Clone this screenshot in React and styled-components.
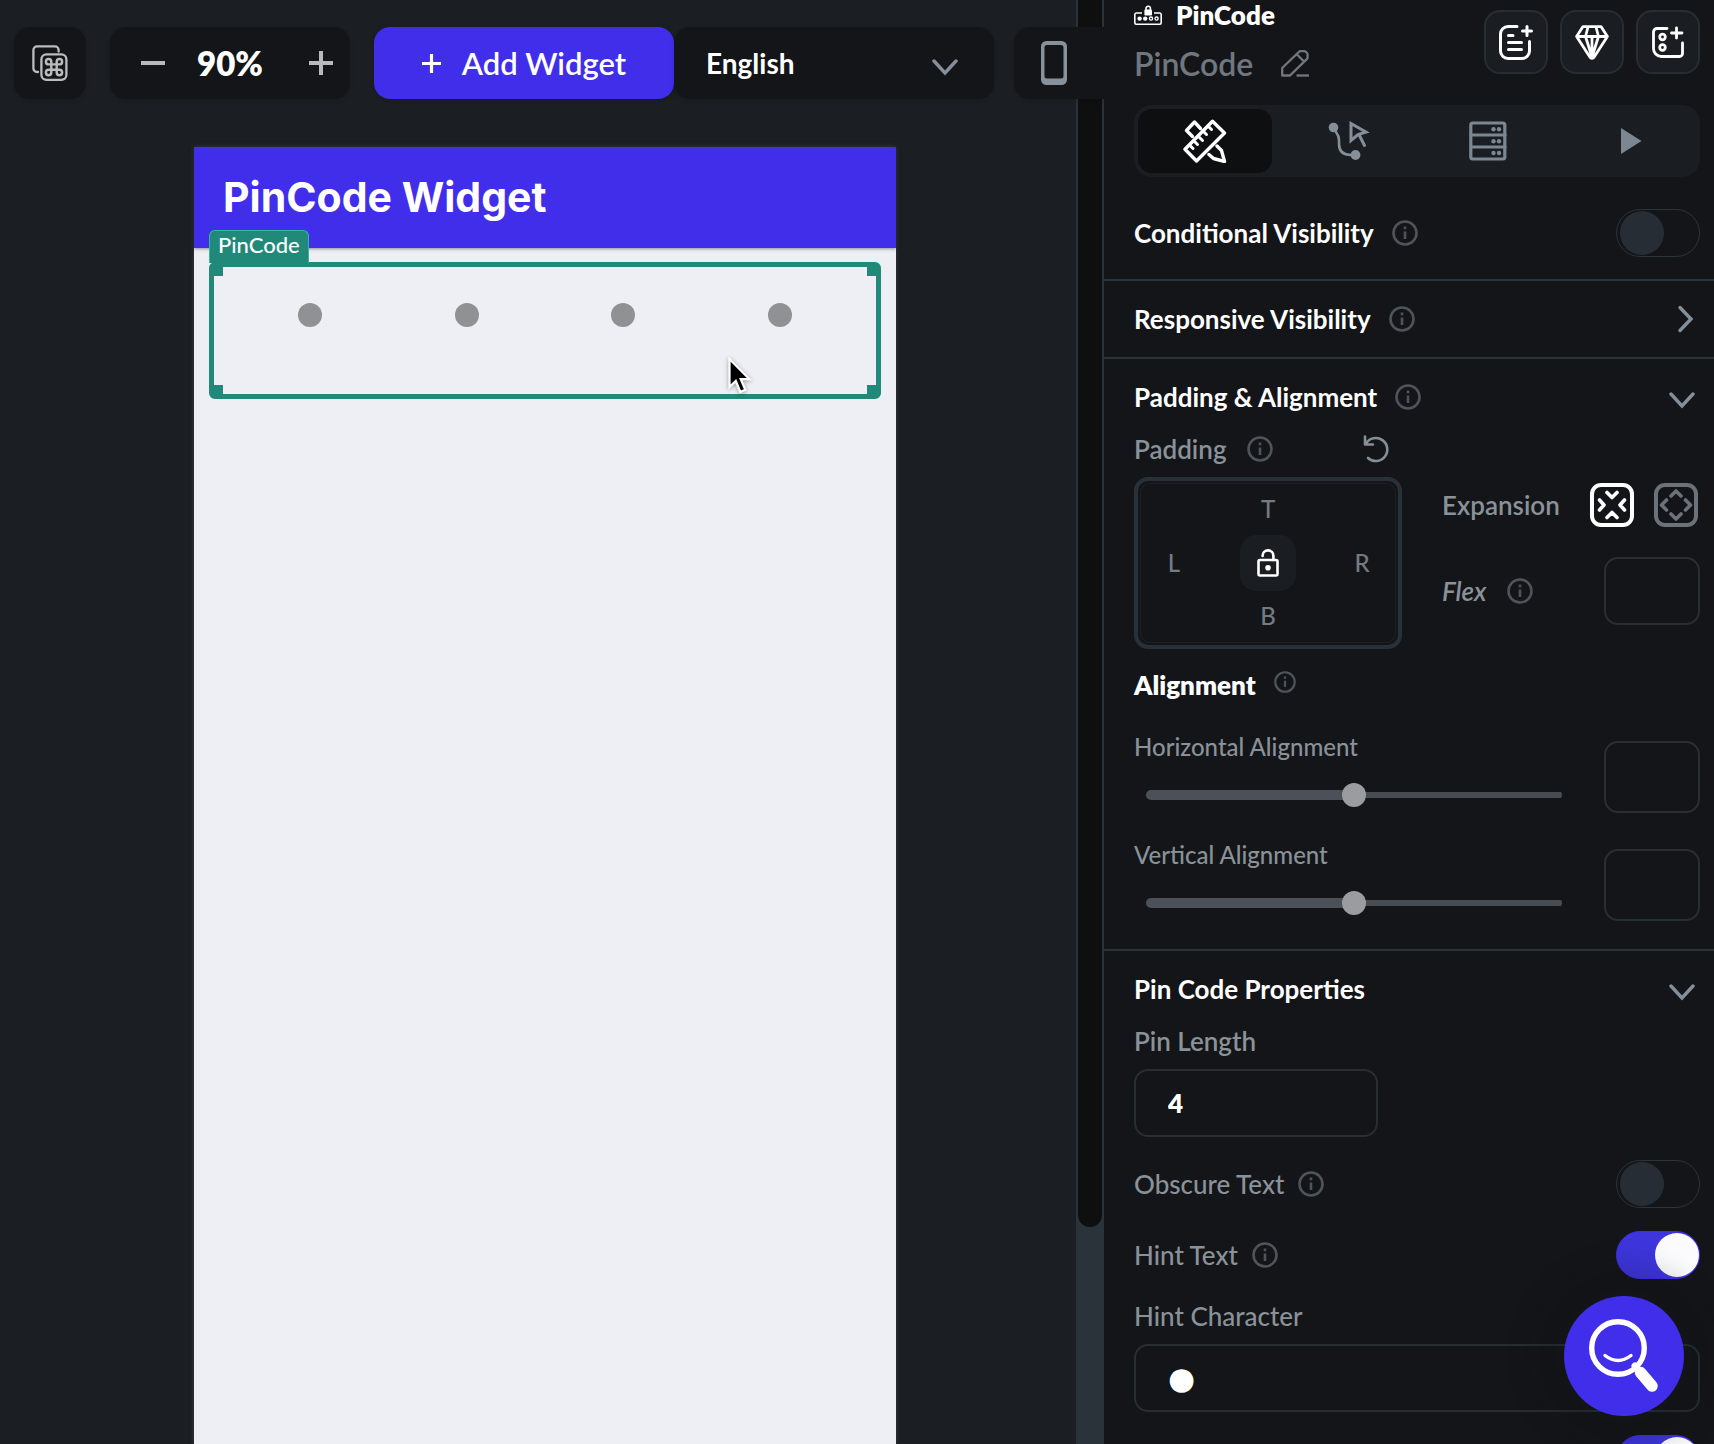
import React, { useId, useState } from 'react';
import styled, { createGlobalStyle, css } from 'styled-components';

const c = {
  canvas: '#1b1f23',
  panel: '#141518',
  raised: '#1a1e22',
  line: '#2b333a',
  brand: '#402eeb',
  teal: '#20897a',
  white: '#ffffff',
  muted: '#8a9299',
  dim: '#70777f',
  icon: '#858f99',
};

const Global = createGlobalStyle`
  *, *::before, *::after { box-sizing: border-box; }
  body {
    margin: 0;
    background: ${c.canvas};
    font-family: Lato, "Open Sans", "Liberation Sans", sans-serif;
  }
  button, input, select { font: inherit; color: inherit; margin: 0; }
  button { padding: 0; border: 0; background: none; cursor: pointer; }
  svg { display: block; flex: none; }
  h1, h2, h3, p { margin: 0; }
`;

/* ---------- Shell ---------- */

const Shell = styled.div`
  position: relative;
  display: flex;
  height: 100vh;
  overflow: hidden;
  color: ${c.white};
`;

const Canvas = styled.main`
  flex: 1;
  min-width: 0;
  display: flex;
  flex-direction: column;
  gap: 48px;
  padding: 27px 0 0 14px;
  background: ${c.canvas};
`;

const Gutter = styled.div`
  flex: 0 0 28px;
  padding: 0 2px;
  background: ${c.line};
`;

const Thumb = styled.div`
  height: 85%;
  border-radius: 0 0 12px 12px;
  background: #0e0f0f;
`;

const Panel = styled.aside`
  position: relative;
  z-index: 2;
  flex: 0 0 610px;
  display: flex;
  flex-direction: column;
  overflow: hidden;
  background: ${c.panel};

  > * { flex: none; }
`;

/* ---------- Toolbar ---------- */

const Toolbar = styled.header`
  position: relative;
  z-index: 1;
  display: flex;
  gap: 20px;
`;

const ToolGroup = styled.div`
  display: flex;
  gap: ${(p) => p.$gap}px;
`;

const tile = css`
  flex: none;
  height: 72px;
  border-radius: 16px;
  background: #131518;
  box-shadow: 0 2px 4px rgba(0, 0, 0, 0.12);
`;

const TileButton = styled.button`
  ${tile}
  width: 72px;
  display: grid;
  place-items: center;
`;

const ZoomBox = styled.div`
  ${tile}
  width: 240px;
  display: grid;
  grid-template-columns: 26px 1fr 26px;
  align-items: center;
  column-gap: 31px;
  padding: 0 16px 0 30px;
  font-size: 33px;
  font-weight: 800;
`;

const ZoomButton = styled.button`
  height: 48px;
  display: grid;
  place-items: center;
`;

const AddButton = styled.button`
  ${tile}
  width: 300px;
  display: flex;
  align-items: center;
  justify-content: center;
  gap: 21px;
  background: ${c.brand};
  font-size: 31px;
  font-weight: 600;
`;

const SelectBox = styled.div`
  ${tile}
  width: 320px;
  display: grid;
  align-items: center;

  > * { grid-area: 1 / 1; }
  > svg { justify-self: end; margin: 8px 36px 0 0; pointer-events: none; }
`;

const LanguageSelect = styled.select`
  appearance: none;
  width: 100%;
  height: 100%;
  padding: 0 32px;
  border: 0;
  background: transparent;
  font-size: 28px;
  font-weight: 700;
`;

const DeviceBox = styled.div`
  ${tile}
  width: 150px;
  display: flex;
  padding: 0 27px;
`;

/* ---------- Device preview ---------- */

const Device = styled.section`
  flex: 1;
  margin: 0 180px;
  background: #eeeff4;
  color: ${c.white};
  box-shadow: 0 0 4px rgba(90, 90, 90, 0.6);
`;

const AppBar = styled.div`
  height: 101px;
  padding: 0 29px;
  background: ${c.brand};
  box-shadow: 0 1px 3px rgba(0, 0, 0, 0.4);
`;

const AppTitle = styled.h1`
  font-family: Inter, "Open Sans", sans-serif;
  font-size: 41px;
  line-height: 100px;
  font-weight: 700;
`;

const Selection = styled.div`
  position: relative;
  display: grid;
  grid-template-columns: repeat(4, 1fr);
  justify-items: center;
  align-items: start;
  height: 137px;
  margin: 14px 15px 0;
  padding: 36px 18px 0;
  border: 5px solid ${c.teal};
  border-radius: 6px;
`;

const SelectionTag = styled.span`
  position: absolute;
  left: -5px;
  bottom: 100%;
  margin-bottom: 4px;
  height: 33px;
  padding: 0 8px;
  border: 1px solid #35b79b;
  border-bottom: 0;
  border-radius: 6px 6px 0 0;
  background: ${c.teal};
  font-size: 22px;
  line-height: 28px;
  font-weight: 500;
`;

const Handle = styled.i`
  position: absolute;
  width: 9px;
  height: 9px;
  background: ${c.teal};
  ${(p) => (p.$v === 'top' ? 'top: 0;' : 'bottom: 0;')}
  ${(p) => (p.$h === 'left' ? 'left: 0;' : 'right: 0;')}
`;

const PinDot = styled.span`
  width: 24px;
  height: 24px;
  border-radius: 50%;
  background: #909193;
`;

const Pointer = styled.svg`
  position: absolute;
  left: 514px;
  top: 90px;
  filter: drop-shadow(0 1px 2px rgba(0, 0, 0, 0.35));
`;

/* ---------- Panel head ---------- */

const PanelHead = styled.div`
  display: flex;
  justify-content: space-between;
  padding: 0 14px 21px 30px;
`;

const Kind = styled.div`
  display: flex;
  align-items: center;
  gap: 14px;
  height: 30px;
  font-size: 26px;
  font-weight: 800;
`;

const NameRow = styled.div`
  display: flex;
  align-items: center;
  gap: 28px;
  height: 54px;
  padding-top: 12px;
  color: ${c.dim};
  font-size: 32px;
  font-weight: 600;
`;

const PlainButton = styled.button`
  display: grid;
  place-items: center;
`;

const HeadActions = styled.div`
  display: flex;
  gap: 12px;
  padding-top: 10px;
`;

const HeadButton = styled.button`
  width: 64px;
  height: 64px;
  display: grid;
  place-items: center;
  border: 2px solid #272d33;
  border-radius: 16px;
  background: ${c.raised};
`;

const Tabs = styled.nav`
  display: grid;
  grid-template-columns: repeat(4, 1fr);
  height: 72px;
  margin: 0 14px 0 30px;
  border-radius: 18px;
  background: ${c.raised};
`;

const Tab = styled.button`
  display: grid;
  place-items: center;
  margin: 4px;
  border-radius: 14px;
  background: ${(p) => (p.$active ? '#0e0f10' : 'transparent')};
`;

/* ---------- Sections ---------- */

const Section = styled.section`
  padding: 0 14px ${(p) => p.$bottom || 0}px 30px;
  border-bottom: 2px solid ${c.line};
`;

const Row = styled.div`
  display: flex;
  align-items: center;
  justify-content: space-between;
  min-height: ${(p) => p.$h || 48}px;
  margin-top: ${(p) => p.$top || 0}px;
`;

const LabelGroup = styled.div`
  display: flex;
  align-items: ${(p) => (p.$raised ? 'flex-start' : 'center')};
  gap: ${(p) => p.$gap || 18}px;
`;

const Heading = styled.h3`
  font-size: 26px;
  line-height: 28px;
  font-weight: ${(p) => (p.$heavy ? 800 : 700)};
`;

const Label = styled.label`
  display: block;
  color: ${c.muted};
  font-size: ${(p) => (p.$small ? 24 : 26)}px;
  line-height: 28px;
  font-weight: ${(p) => (p.$strong ? 600 : 500)};
  font-style: ${(p) => (p.$italic ? 'italic' : 'normal')};
`;

const CollapseButton = styled.button`
  display: grid;
  place-items: center;
  padding: ${(p) => (p.$open ? '6px 5px 0 0' : '0 5px 0 0')};
`;

const Toggle = styled.input`
  appearance: none;
  display: flex;
  align-items: center;
  justify-content: ${(p) => (p.checked ? 'flex-end' : 'flex-start')};
  flex: none;
  width: 84px;
  height: 48px;
  padding: 0 ${(p) => (p.checked ? 0 : 3)}px;
  border: 1px solid ${(p) => (p.checked ? c.brand : c.line)};
  border-radius: 24px;
  background: ${(p) => (p.checked ? '#3e35dc' : 'transparent')};

  &::before {
    content: '';
    width: 44px;
    height: 44px;
    border-radius: 50%;
    background: ${(p) => (p.checked ? '#fbfbfd' : '#262d34')};
  }
`;

const Field = styled.input`
  display: block;
  width: ${(p) => p.$w || '100%'};
  height: ${(p) => p.$h || 68}px;
  padding: 0 ${(p) => (p.$compact ? 16 : 32)}px;
  border: 2px solid #272e34;
  border-radius: 14px;
  background: transparent;
  font-size: 26px;
  font-weight: 800;
  outline: none;
`;

const GlyphField = styled(Field)`
  font-family: "DejaVu Sans", sans-serif;
  font-size: 31px;
`;

const Stack = styled.div`
  display: flex;
  flex-direction: column;
  gap: ${(p) => p.$gap}px;
  padding-top: ${(p) => p.$top || 0}px;
`;

const PaddingArea = styled.div`
  display: grid;
  grid-template-columns: 268px 1fr;
  gap: 14px 40px;
`;

const PaddingTitle = styled(Row)`
  grid-column: 1;
  padding-right: 12px;
`;

const PaddingFrame = styled.div`
  grid-column: 1;
  height: 172px;
  padding: 2px;
  border: 4px solid #28313a;
  border-radius: 14px;
`;

const PaddingGrid = styled.div`
  display: grid;
  grid-template: 1fr 56px 1fr / 66px 1fr 66px;
  place-items: center;
  height: 100%;
  border: 1px solid #1d2226;
  border-radius: 10px;
`;

const SideInput = styled.input`
  grid-area: ${(p) => p.$at};
  width: 48px;
  height: 32px;
  padding: 0 0 2px;
  border: 0;
  outline: 0;
  background: transparent;
  text-align: center;
  font-size: 24px;
  font-weight: 500;

  &::placeholder { color: #747b83; opacity: 1; }
`;

const LockButton = styled.button`
  grid-area: 2 / 2;
  width: 56px;
  height: 56px;
  display: grid;
  place-items: center;
  border-radius: 16px;
  background: ${c.raised};
`;

const ExpansionArea = styled.div`
  grid-column: 2;
  display: flex;
  flex-direction: column;
  gap: 30px;
  padding-top: 6px;
`;

const ExpandButtons = styled.div`
  display: flex;
  gap: 20px;
  padding-right: 2px;
`;

const ExpandButton = styled.button`
  width: 44px;
  height: 44px;
  display: grid;
  place-items: center;
  border: 4px solid ${(p) => (p.$active ? c.white : '#6a727b')};
  border-radius: 11px;
  color: ${(p) => (p.$active ? c.white : '#6a727b')};
`;

const SliderRow = styled.div`
  display: grid;
  grid-template-columns: 1fr 96px;
  column-gap: 42px;
  align-items: end;
`;

const SliderCol = styled(Stack)`
  padding-bottom: 6px;
`;

const Slider = styled.input`
  appearance: none;
  display: block;
  height: 24px;
  margin-left: 12px;
  background: transparent;

  &::-webkit-slider-runnable-track {
    height: 10px;
    border-radius: 5px;
    background:
      linear-gradient(#4c5058, #4c5058) left center / 50% 10px no-repeat,
      linear-gradient(#484d54, #484d54) right center / 50% 6px no-repeat;
  }

  &::-webkit-slider-thumb {
    appearance: none;
    width: 24px;
    height: 24px;
    margin-top: -7px;
    border-radius: 50%;
    background: #9b9c9f;
  }
`;

const HelpButton = styled.button`
  position: absolute;
  z-index: 3;
  right: 30px;
  bottom: 28px;
  width: 120px;
  height: 120px;
  border-radius: 50%;
  background: ${c.brand};
  box-shadow: 0 0 24px 36px rgba(12, 13, 15, 0.12);
`;

/* ---------- Icons ---------- */

const Svg = ({ w, h, sw = 2, children, color = 'currentColor', ...rest }) => (
  <svg width={w} height={h} viewBox={`0 0 ${w} ${h}`} fill="none" stroke={color}
    strokeWidth={sw} strokeLinecap="round" strokeLinejoin="round" aria-hidden="true" {...rest}>
    {children}
  </svg>
);

const InfoIcon = ({ size = 26 }) => (
  <svg width={size} height={size} viewBox="0 0 26 26" fill="none" stroke="#4d545b" strokeWidth="2.6" aria-hidden="true">
    <circle cx="13" cy="13" r="11.5" />
    <path d="M13 11.5V19M13 6.6v2.6" />
  </svg>
);

const Info = ({ topic, size }) => (
  <PlainButton type="button" aria-label={`About ${topic}`}><InfoIcon size={size} /></PlainButton>
);

const CommandIcon = () => (
  <Svg w={36} h={36} sw={2.3} color="#bcbcbc">
    <path d="M6 27H5a3.6 3.6 0 0 1-3.6-3.6V5A3.6 3.6 0 0 1 5 1.4h18A3.6 3.6 0 0 1 26.600 5v1.500" />
    <rect x="9.400" y="9.400" width="25" height="25.400" rx="5" />
    <path transform="translate(11.200 11.300) scale(.9)" strokeWidth="2.700" d="M15 6v12a3 3 0 1 0 3-3H6a3 3 0 1 0 3 3V6a3 3 0 1 0-3 3h12a3 3 0 1 0-3-3" />
  </Svg>
);

const MinusIcon = () => (
  <Svg w={24} h={24} sw={4} color="#b9b9b9" strokeLinecap="butt"><path d="M0 12h24" /></Svg>
);

const PlusIcon = ({ size = 24, sw = 4, color = '#b9b9b9' }) => (
  <svg width={size} height={size} viewBox="0 0 24 24" fill="none" stroke={color} strokeWidth={sw} aria-hidden="true">
    <path d="M12 0v24M0 12h24" />
  </svg>
);

const ChevronDown = () => (
  <Svg w={26} h={18} sw={3.4} color={c.icon}><path d="M2 3l11 12L24 3" strokeLinejoin="miter" /></Svg>
);

const ChevronRight = () => (
  <Svg w={18} h={28} sw={3.4} color={c.icon}><path d="M3 2.500l11 11.500L3 25.500" strokeLinejoin="miter" /></Svg>
);

const PhoneIcon = () => (
  <svg width="26" height="44" viewBox="0 0 26 44" aria-hidden="true">
    <path fill="#87919b" fillRule="evenodd" d="M5.500 0h15A5.500 5.500 0 0 1 26 5.500v33a5.500 5.500 0 0 1-5.500 5.500h-15A5.500 5.500 0 0 1 0 38.500v-33A5.500 5.500 0 0 1 5.500 0zM6 4a2.500 2.500 0 0 0-2.500 2.500V35A2.500 2.500 0 0 0 6 37.500h14a2.500 2.500 0 0 0 2.500-2.500V6.500A2.500 2.500 0 0 0 20 4z" />
  </svg>
);

const PinCodeIcon = () => (
  <svg width="28" height="20" viewBox="0 0 28 20" fill="none" stroke="#fff" strokeWidth="1.600" aria-hidden="true">
    <path d="M8 8H2.200A1.500 1.500 0 0 0 .8 9.500v8.200a1.500 1.500 0 0 0 1.400 1.500h23.600a1.500 1.500 0 0 0 1.400-1.500V9.500A1.500 1.500 0 0 0 25.800 8H20" />
    <path d="M12 5V3.400a2.200 2.200 0 0 1 4.400 0V5" />
    <rect x="10.400" y="4.400" width="7.600" height="6" rx="1" fill="#fff" stroke="none" />
    <circle cx="5.600" cy="13.600" r="2.200" fill="#fff" stroke="none" />
    <circle cx="11.200" cy="13.600" r="2.200" fill="#fff" stroke="none" />
    <circle cx="17" cy="13.600" r="1.600" strokeWidth="1.300" />
    <circle cx="22.600" cy="13.600" r="1.600" strokeWidth="1.300" />
  </svg>
);

const PencilIcon = () => (
  <Svg w={28} h={27} sw={2.3} color={c.dim} strokeLinecap="butt">
    <path d="M1.200 25.500v-7.500L17.800 2a2.800 2.800 0 0 1 2-.8h3.200a2.800 2.800 0 0 1 2 .8l.8.8a2.900 2.900 0 0 1 .8 2v2.400a2.800 2.800 0 0 1-.8 2L9 25.500z" />
    <path d="M15.500 4l7.500 7.500" />
    <path d="M15.500 25.500H28" />
  </Svg>
);

const NotePlusIcon = () => (
  <Svg w={34} h={35} sw={3}>
    <path d="M18 1.500H9A7.500 7.500 0 0 0 1.500 9v17A7.500 7.500 0 0 0 9 33.500h14a7.500 7.500 0 0 0 7.500-7.500V16.500" />
    <path d="M9.500 10.500h4.500M9.500 17.500h13M9.500 24.500h13M28 1.500v9M23.500 6h9" />
  </Svg>
);

const DiamondIcon = () => (
  <Svg w={34} h={35} sw={2.8}>
    <path d="M8 1.600h18L32.400 11.500 19 32.200a2.400 2.400 0 0 1-4 0L1.600 11.500zM1.600 11.500h30.800M13 2l-2.500 9.500L17 32l6.500-20.500L21 2M17 11.500V32" />
  </Svg>
);

const ComponentPlusIcon = () => (
  <Svg w={32} h={32} sw={2.8}>
    <path d="M15 2.500H5A3.500 3.500 0 0 0 1.500 6v16A8 8 0 0 0 9.500 30.500h18a3 3 0 0 0 3-3V17" />
    <circle cx="10.500" cy="11" r="2.800" />
    <circle cx="10.500" cy="21.500" r="2.800" />
    <path d="M24.500 2v10M19.500 7h10.500" />
  </Svg>
);

const DesignIcon = () => (
  <Svg w={44} h={44} sw={3.4}>
    <path d="M29.500 2.200 41.500 14 13.500 42 2 30.200z" />
    <path d="M25 7l3.500 3.500M20 12l3.500 3.500M15 17l4.500 4.500M11 22l3.500 3.500M7 26.500l3 3" strokeWidth="3" />
    <path d="M9.500 17.500 3.500 11.500l8-8.500 6 6.500" />
    <path d="M34 27l4.500 4.500 3 11-11-3-4.500-4" />
  </Svg>
);

const FlowIcon = () => (
  <Svg w={36} h={40} sw={3} color={c.icon} overflow="visible">
    <circle cx="5.500" cy="6.500" r="4.800" fill={c.icon} stroke="none" />
    <circle cx="27.500" cy="34" r="4.900" fill={c.icon} stroke="none" />
    <path strokeWidth="2.600" d="M6 8c2 4 5 5 5 11v4c0 7 3.500 11 12 11" />
    <path d="M23 2.500l15 8.500-8 2.500-7 6zM31.500 14.500l5 10" strokeLinejoin="miter" />
  </Svg>
);

const DatabaseIcon = () => (
  <Svg w={38} h={40} sw={3.2} color="#7d8791">
    <rect x="1.800" y="2" width="34" height="36" rx="2" />
    <path d="M2 14h34M2 26h34" />
    <g fill="#7d8791" stroke="none">
      <circle cx="24.500" cy="8.200" r="2.200" /><circle cx="30" cy="8.200" r="2.200" />
      <circle cx="24.500" cy="20.200" r="2.200" /><circle cx="30" cy="20.200" r="2.200" />
      <circle cx="24.500" cy="32" r="2.200" /><circle cx="30" cy="32" r="2.200" />
    </g>
  </Svg>
);

const PlayIcon = () => (
  <svg width="20" height="28" viewBox="0 0 20 28" overflow="visible" aria-hidden="true"><path fill="#7d8791" d="M2 1l20.500 13L2 27z" /></svg>
);

const UndoIcon = () => (
  <Svg w={27} h={28} sw={2.6} color={c.icon}>
    <path d="M2 1.500V9.500h8M3 8.500A11.500 11.500 0 1 1 5 23" />
  </Svg>
);

const LockIcon = () => (
  <Svg w={22} h={28} sw={2.6}>
    <rect x="1.500" y="11" width="19" height="15.500" rx="1.500" />
    <path d="M5.600 7V6.800a5.400 5.400 0 0 1 10.800 0V11" />
    <circle cx="11" cy="18.800" r="2.800" fill="currentColor" stroke="none" />
  </Svg>
);

const ShrinkIcon = () => (
  <Svg w={32} h={32} sw={3.6}>
    <path d="M11 3.500l5 5 5-5M11 28.500l5-5 5 5M3.500 11l4.500 5-4.500 5M28.500 11L24 16l4.500 5" />
  </Svg>
);

const GrowIcon = () => (
  <Svg w={34} h={34} sw={3.6}>
    <path d="M12 8l5-5 5 5M12 26l5 5 5-5M7.500 12l-5 5 5 5M26.500 12l5 5-5 5" />
  </Svg>
);

const SearchSmile = () => (
  <svg width="120" height="120" viewBox="0 0 120 120" fill="none" stroke="#fff" strokeLinecap="round" aria-hidden="true">
    <circle cx="54" cy="52" r="26.300" strokeWidth="5.400" />
    <path d="M41 59.500q13 10 26 0" strokeWidth="3.400" />
    <path d="M71 70l5 6" strokeWidth="7" />
    <path d="M76.500 76.500L88 90" strokeWidth="11.500" />
  </svg>
);

/* ---------- Parts ---------- */

function Switch({ id, label, on = false }) {
  const [checked, setChecked] = useState(on);
  return (
    <Toggle type="checkbox" role="switch" id={id} aria-label={label}
      checked={checked} onChange={(e) => setChecked(e.target.checked)} />
  );
}

function SwitchRow({ label, on }) {
  const id = useId();
  return (
    <Row>
      <LabelGroup $gap={14}>
        <Label htmlFor={id}>{label}</Label>
        <Info topic={label} />
      </LabelGroup>
      <Switch id={id} on={on} />
    </Row>
  );
}

function AlignmentSlider({ label }) {
  const id = useId();
  return (
    <SliderRow>
      <SliderCol $gap={22}>
        <Label $small htmlFor={id}>{label}</Label>
        <Slider id={id} type="range" min="-1" max="1" step="0.01" defaultValue="0" />
      </SliderCol>
      <Field $compact $h={72} aria-label={`${label} value`} />
    </SliderRow>
  );
}

function SectionTitle({ title, info = true, open = false }) {
  return (
    <Row $h={76}>
      <LabelGroup>
        <Heading>{title}</Heading>
        {info && <Info topic={title} />}
      </LabelGroup>
      <CollapseButton type="button" $open={open} aria-expanded={open} aria-label={title}>
        {open ? <ChevronDown /> : <ChevronRight />}
      </CollapseButton>
    </Row>
  );
}

const sides = [['T', 'Top', '1 / 2'], ['L', 'Left', '2 / 1'], ['R', 'Right', '2 / 3'], ['B', 'Bottom', '3 / 2']];

export default function App() {
  return (
    <>
      <Global />
      <Shell>
        <Canvas>
          <Toolbar>
            <ToolGroup $gap={24}>
              <TileButton type="button" aria-label="Shortcuts"><CommandIcon /></TileButton>
              <ZoomBox>
                <ZoomButton type="button" aria-label="Zoom out"><MinusIcon /></ZoomButton>
                <span>90%</span>
                <ZoomButton type="button" aria-label="Zoom in"><PlusIcon /></ZoomButton>
              </ZoomBox>
              <ToolGroup $gap={0}>
                <AddButton type="button"><PlusIcon size={19} sw={4} color="#fff" />Add Widget</AddButton>
                <SelectBox>
                  <LanguageSelect aria-label="Language" defaultValue="en">
                    <option value="en">English</option>
                  </LanguageSelect>
                  <ChevronDown />
                </SelectBox>
              </ToolGroup>
            </ToolGroup>
            <DeviceBox>
              <PlainButton type="button" aria-label="Phone"><PhoneIcon /></PlainButton>
            </DeviceBox>
          </Toolbar>

          <Device>
            <AppBar><AppTitle>PinCode Widget</AppTitle></AppBar>
            <Selection>
              <SelectionTag>PinCode</SelectionTag>
              <Handle $v="top" $h="left" />
              <Handle $v="top" $h="right" />
              <Handle $v="bottom" $h="left" />
              <Handle $v="bottom" $h="right" />
              <PinDot /><PinDot /><PinDot /><PinDot />
              <Pointer width="24" height="37" viewBox="0 0 24 37" aria-hidden="true">
                <path d="M1.500 2v28l6.300-6 4.500 11 5-2.200-4.600-10.600h8.800z" fill="#000" stroke="#fff" strokeWidth="2.200" />
              </Pointer>
            </Selection>
          </Device>
        </Canvas>

        <Gutter><Thumb /></Gutter>

        <Panel>
          <PanelHead>
            <div>
              <Kind><PinCodeIcon />PinCode</Kind>
              <NameRow>
                PinCode
                <PlainButton type="button" aria-label="Rename"><PencilIcon /></PlainButton>
              </NameRow>
            </div>
            <HeadActions>
              <HeadButton type="button" aria-label="Add note"><NotePlusIcon /></HeadButton>
              <HeadButton type="button" aria-label="Theme"><DiamondIcon /></HeadButton>
              <HeadButton type="button" aria-label="Create component"><ComponentPlusIcon /></HeadButton>
            </HeadActions>
          </PanelHead>

          <Tabs aria-label="Properties">
            <Tab $active type="button" aria-label="Design"><DesignIcon /></Tab>
            <Tab type="button" aria-label="Actions"><FlowIcon /></Tab>
            <Tab type="button" aria-label="Backend"><DatabaseIcon /></Tab>
            <Tab type="button" aria-label="Animations"><PlayIcon /></Tab>
          </Tabs>

          <Section $bottom={22}>
            <Row $top={32}>
              <LabelGroup>
                <Heading>Conditional Visibility</Heading>
                <Info topic="Conditional Visibility" />
              </LabelGroup>
              <Switch label="Conditional Visibility" />
            </Row>
          </Section>

          <Section>
            <SectionTitle title="Responsive Visibility" />
          </Section>

          <Section $bottom={28}>
            <SectionTitle title="Padding &amp; Alignment" open />
            <PaddingArea>
              <PaddingTitle $h={28}>
                <LabelGroup $gap={20}>
                  <Label as="span" $strong>Padding</Label>
                  <Info topic="Padding" />
                </LabelGroup>
                <PlainButton type="button" aria-label="Reset padding"><UndoIcon /></PlainButton>
              </PaddingTitle>
              <PaddingFrame>
                <PaddingGrid>
                  {sides.map(([key, name, at]) => (
                    <SideInput key={key} $at={at} placeholder={key} aria-label={`${name} padding`} />
                  ))}
                  <LockButton type="button" aria-label="Link sides"><LockIcon /></LockButton>
                </PaddingGrid>
              </PaddingFrame>
              <ExpansionArea>
                <Row $h={44}>
                  <Label as="span" $strong>Expansion</Label>
                  <ExpandButtons>
                    <ExpandButton $active type="button" aria-label="Shrink"><ShrinkIcon /></ExpandButton>
                    <ExpandButton type="button" aria-label="Expand"><GrowIcon /></ExpandButton>
                  </ExpandButtons>
                </Row>
                <Row $h={68}>
                  <LabelGroup $gap={20}>
                    <Label $strong $italic htmlFor="flex">Flex</Label>
                    <Info topic="Flex" />
                  </LabelGroup>
                  <Field id="flex" $compact $w="96px" />
                </Row>
              </ExpansionArea>
            </PaddingArea>
            <Row $h={28} $top={22}>
              <LabelGroup $raised>
                <Heading $heavy>Alignment</Heading>
                <Info topic="Alignment" size={22} />
              </LabelGroup>
            </Row>
            <Stack $gap={28} $top={34}>
              <AlignmentSlider label="Horizontal Alignment" />
              <AlignmentSlider label="Vertical Alignment" />
            </Stack>
          </Section>

          <Section>
            <SectionTitle title="Pin Code Properties" info={false} open />
            <Stack $gap={23}>
              <Stack $gap={14}>
                <Label $strong htmlFor="pin-length">Pin Length</Label>
                <Field id="pin-length" $w="244px" defaultValue="4" />
              </Stack>
              <SwitchRow label="Obscure Text" />
              <SwitchRow label="Hint Text" on />
              <Stack $gap={14}>
                <Label htmlFor="hint-character">Hint Character</Label>
                <GlyphField id="hint-character" defaultValue="●" />
              </Stack>
              <Row>
                <span />
                <Switch label="Autofocus" on />
              </Row>
            </Stack>
          </Section>
        </Panel>

        <HelpButton type="button" aria-label="Search help"><SearchSmile /></HelpButton>
      </Shell>
    </>
  );
}
